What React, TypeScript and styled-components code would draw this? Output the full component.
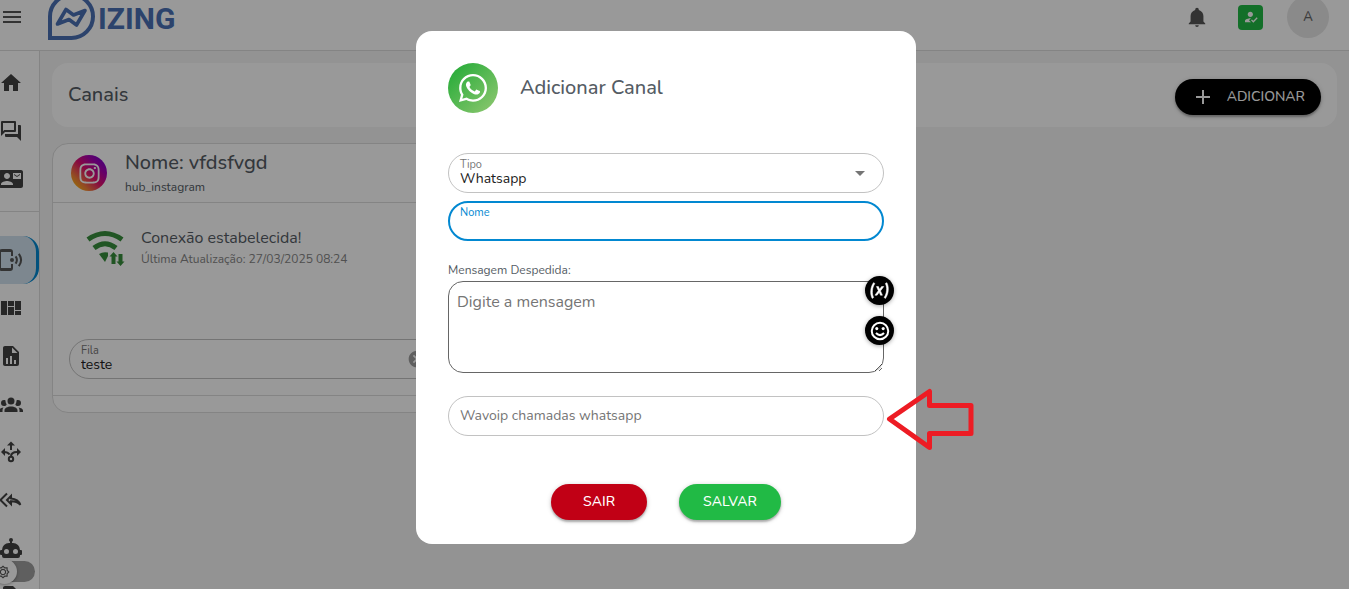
import React, { useState } from "react";
import styled, { createGlobalStyle, css } from "styled-components";
import {
  MdAdd,
  MdArrowDropDown,
  MdCancel,
  MdContactMail,
  MdHome,
  MdHowToReg,
  MdMenu,
  MdOutlineBrightness5,
} from "react-icons/md";
import { FaInstagram, FaWhatsapp } from "react-icons/fa";

const GlobalStyle = createGlobalStyle`
  *, *::before, *::after { box-sizing: border-box; }
  body {
    margin: 0;
    background: #f5f5f5;
    color: #555c64;
    font-family: "Nunito", "Open Sans", "Noto Sans", sans-serif;
    font-size: 14px;
  }
  button, input, select, textarea { font: inherit; color: inherit; }
  button { cursor: pointer; }
  svg { display: block; flex: none; }
`;

const primary = "#0288d1";

const Shell = styled.div`
  display: flex;
  flex-direction: column;
  height: 100vh;
  overflow: hidden;
`;

const Header = styled.header`
  display: flex;
  align-items: center;
  flex: none;
  height: 51px;
  padding: 0 20px 16px 0;
  background: #fff;
  border-bottom: 1px solid #dcdcdc;
`;

const IconButton = styled.button`
  display: flex;
  padding: 0;
  border: 0;
  background: none;
  color: #555;
`;

const Brand = styled.a`
  display: flex;
  align-items: center;
  gap: 3px;
  height: 34px;
  margin-left: 24px;
  color: #4a70b5;
  text-decoration: none;
`;

const Wordmark = styled.span`
  padding-top: 4px;
  font: bold 30px/30px Roboto, "Liberation Sans", sans-serif;
`;

const HeaderActions = styled.div`
  display: flex;
  align-items: center;
  margin-left: auto;
`;

const Status = styled.button`
  display: flex;
  align-items: center;
  justify-content: center;
  width: 25px;
  height: 25px;
  margin: 0 24px 0 30px;
  padding: 0;
  border: 0;
  border-radius: 4px;
  background: #21ba45;
  color: #fff;
`;

const UserAvatar = styled.button`
  width: 42px;
  height: 42px;
  padding: 0;
  border: 0;
  border-radius: 50%;
  background: #e6e6e6;
  color: #666;
  font-size: 13px;
  font-weight: 600;
`;

const Body = styled.div`
  display: flex;
  flex: 1;
  min-height: 0;
`;

const Sidebar = styled.nav`
  flex: none;
  width: 40px;
  padding-top: 8px;
  background: #fff;
  border-right: 1px solid #dcdcdc;
`;

const NavItem = styled.a<{ $active?: boolean }>`
  display: flex;
  align-items: center;
  height: 48px;
  color: #424242;
  ${(p) =>
    p.$active &&
    css`
      background: #d0e2ee;
      border-right: 3px solid ${primary};
      border-radius: 0 16px 16px 0;
    `}
`;

const NavIcon = styled.span`
  display: flex;
  justify-content: center;
  width: 22px;
`;

const Divider = styled.hr`
  height: 1px;
  margin: 8px 0 24px;
  border: 0;
  background: #dcdcdc;
`;

const ThemeToggle = styled.label`
  position: fixed;
  left: -8px;
  bottom: 5px;
  display: flex;
  align-items: center;
  width: 43px;
  height: 25px;
  cursor: pointer;

  input {
    position: absolute;
    opacity: 0;
  }
`;

const Track = styled.span`
  display: flex;
  align-items: center;
  width: 43px;
  height: 21px;
  border-radius: 11px;
  background: #9e9e9e;
`;

const Knob = styled.span`
  display: flex;
  align-items: center;
  justify-content: center;
  width: 25px;
  height: 25px;
  padding-right: 4px;
  flex: none;
  border-radius: 50%;
  background: #fff;
  color: #555;
  box-shadow: 0 1px 3px rgba(0, 0, 0, 0.3);
`;

const Main = styled.main`
  flex: 1;
  min-width: 0;
  padding: 12px;
`;

const PageBar = styled.section`
  display: flex;
  align-items: flex-start;
  justify-content: space-between;
  height: 64px;
  padding: 16px 16px 0;
  border-radius: 16px;
  background: #fff;
`;

const Heading = styled.h2<{ $compact?: boolean }>`
  margin: 0;
  font-size: 20px;
  line-height: ${(p) => (p.$compact ? "28px" : "32px")};
  font-weight: 500;
`;

const PillButton = styled.button<{ $color: string; $wide?: boolean }>`
  display: flex;
  align-items: center;
  justify-content: center;
  gap: 12px;
  height: 36px;
  min-width: 96px;
  padding: ${(p) => (p.$wide ? "0 24px 1px" : "0 16px 1px")};
  border: 0;
  border-radius: 18px;
  background: ${(p) => p.$color};
  color: #fff;
  font-weight: 500;
  text-transform: uppercase;
  box-shadow: 0 1px 5px rgba(0, 0, 0, 0.2), 0 2px 2px rgba(0, 0, 0, 0.24);
`;

const CardGrid = styled.div`
  display: grid;
  grid-template-columns: repeat(3, 1fr);
  margin-top: 16px;
`;

const Card = styled.article`
  border: 1px solid #dcdcdc;
  border-radius: 16px;
  background: #fff;
`;

const CardHeader = styled.header`
  display: flex;
  align-items: center;
  gap: 18px;
  height: 58px;
  padding: 0 18px;
`;

const CardText = styled.div`
  display: flex;
  flex-direction: column;
`;

const Caption = styled.span<{ $muted?: boolean }>`
  font-size: 12px;
  line-height: 20px;
  color: ${(p) => (p.$muted ? "#858585" : "inherit")};
`;

const InstagramBadge = styled.span`
  display: flex;
  align-items: center;
  justify-content: center;
  width: 36px;
  height: 36px;
  border-radius: 50%;
  background: linear-gradient(45deg, #fdc500 5%, #f5803a 25%, #e1106c 50%, #a800b0 72%, #6a00d0 95%);
  color: #fff;
`;

const CardBody = styled.div`
  display: flex;
  flex-direction: column;
  justify-content: space-between;
  height: 194px;
  padding: 24px 16px 16px;
  border: solid #dcdcdc;
  border-width: 1px 0;
`;

const Connection = styled.div`
  display: flex;
  align-items: center;
  gap: 16px;
  padding-left: 16px;
`;

const ConnectionTitle = styled.span`
  font-size: 16px;
  line-height: 22px;
`;

const CardFooter = styled.footer`
  height: 16px;
`;

const FieldBox = styled.div<{ $focused?: boolean }>`
  display: flex;
  align-items: center;
  height: 40px;
  padding: 0 11px;
  border: 1px solid #c2c2c2;
  border-radius: 20px;
  ${(p) =>
    p.$focused &&
    css`
      padding: 0 10px;
      border: 2px solid ${primary};
    `}
`;

const FieldStack = styled.div`
  display: flex;
  flex-direction: column;
  flex: 1;
  min-width: 0;
`;

const controlStyle = css`
  width: 100%;
  height: 16px;
  padding: 0;
  border: 0;
  outline: 0;
  appearance: none;
  background: transparent;
  color: #212121;
  line-height: 16px;
`;

const Select = styled.select`
  ${controlStyle}
`;

const Input = styled.input`
  ${controlStyle}
  &::placeholder {
    color: #757575;
    opacity: 1;
  }
`;

const FloatingLabel = styled.label<{ $active?: boolean }>`
  font-size: 11px;
  line-height: 12px;
  color: ${(p) => (p.$active ? primary : "#757575")};
`;

const FieldIcon = styled.span<{ $faded?: boolean }>`
  display: flex;
  color: ${(p) => (p.$faded ? "#9e9e9e" : "#757575")};
`;

const Backdrop = styled.div`
  position: fixed;
  inset: 0;
  display: flex;
  align-items: center;
  justify-content: center;
  padding: 0 17px 14px 0;
  background: rgba(0, 0, 0, 0.4);
`;

const Dialog = styled.section`
  position: relative;
  width: 500px;
  max-width: 90%;
  padding: 32px 32px 24px;
  border-radius: 16px;
  background: #fff;
`;

const DialogHeader = styled.header`
  display: flex;
  align-items: center;
  gap: 22px;
  margin-bottom: 40px;
`;

const WhatsappBadge = styled.span`
  display: flex;
  align-items: center;
  justify-content: center;
  width: 50px;
  height: 50px;
  border-radius: 50%;
  background: linear-gradient(135deg, #2fae3d 15%, #86c56c 90%);
  color: #fff;
`;

const Form = styled.form`
  display: flex;
  flex-direction: column;
`;

const FieldGroup = styled.div`
  display: flex;
  flex-direction: column;
  gap: 8px;
  margin-bottom: 20px;
`;

const MessageLabel = styled.label`
  margin-bottom: 2px;
  font-size: 12px;
  line-height: 18px;
`;

const MessageBox = styled.div`
  position: relative;
  display: flex;
  margin-bottom: 23px;
`;

const Message = styled.textarea`
  width: 100%;
  height: 92px;
  padding: 8px;
  border: 1px solid #666;
  border-radius: 15px;
  outline: 0;
  font-size: 16px;
  line-height: 24px;
  resize: vertical;
  &::placeholder {
    color: #757575;
  }
`;

const MessageTools = styled.div`
  position: absolute;
  top: -5px;
  right: -10px;
  display: flex;
  flex-direction: column;
  gap: 11px;
`;

const RoundButton = styled.button`
  display: flex;
  align-items: center;
  justify-content: center;
  width: 29px;
  height: 29px;
  padding: 0;
  border: 0;
  border-radius: 50%;
  background: #000;
  color: #fff;
  box-shadow: 0 1px 4px rgba(0, 0, 0, 0.35);
`;

const Actions = styled.div`
  display: flex;
  justify-content: center;
  gap: 32px;
  margin-top: 48px;
`;

const Pointer = styled.svg`
  position: absolute;
  right: -59px;
  bottom: 93px;
`;

const paths = {
  forum:
    "M15,4V11H5.17L4,12.17V4H15M16,2H3A1,1 0 0,0 2,3V17L6,13H16A1,1 0 0,0 17,12V3A1,1 0 0,0 16,2M21,6H19V15H6V17A1,1 0 0,0 7,18H18L22,22V7A1,1 0 0,0 21,6Z",
  dashboard: "M2 5H8V19H2ZM9 5H15V10H9ZM16 5H22V14H16ZM9 11H15V19H9ZM16 15H22V19H16Z",
  report:
    "M13,9H18.5L13,3.5V9M6,2H14L20,8V20A2,2 0 0,1 18,22H6C4.89,22 4,21.1 4,20V4C4,2.89 4.89,2 6,2M7,20H9V14H7V20M11,20H13V12H11V20M15,20H17V16H15V20Z",
  group:
    "M12,5.5A3.5,3.5 0 0,1 15.5,9A3.5,3.5 0 0,1 12,12.5A3.5,3.5 0 0,1 8.5,9A3.5,3.5 0 0,1 12,5.5M5,8C5.56,8 6.08,8.15 6.53,8.42C6.38,9.85 6.8,11.27 7.66,12.38C7.16,13.34 6.16,14 5,14A3,3 0 0,1 2,11A3,3 0 0,1 5,8M19,8A3,3 0 0,1 22,11A3,3 0 0,1 19,14C17.84,14 16.84,13.34 16.34,12.38C17.2,11.27 17.62,9.85 17.47,8.42C17.92,8.15 18.44,8 19,8M5.5,18.25C5.5,16.18 8.41,14.5 12,14.5C15.59,14.5 18.5,16.18 18.5,18.25V20H5.5V18.25M0,20V18.5C0,17.11 1.89,15.94 4.45,15.6C3.86,16.28 3.5,17.22 3.5,18.25V20H0M24,20H20.5V18.25C20.5,17.22 20.14,16.28 19.55,15.6C22.11,15.94 24,17.11 24,18.5V20Z",
  robot:
    "M12,2A2,2 0 0,1 14,4C14,4.74 13.6,5.39 13,5.73V7H14A7,7 0 0,1 21,14H22A1,1 0 0,1 23,15V18A1,1 0 0,1 22,19H21V20A2,2 0 0,1 19,22H5A2,2 0 0,1 3,20V19H2A1,1 0 0,1 1,18V15A1,1 0 0,1 2,14H3A7,7 0 0,1 10,7H11V5.73C10.4,5.39 10,4.74 10,4A2,2 0 0,1 12,2M7.5,13A2.5,2.5 0 0,0 5,15.5A2.5,2.5 0 0,0 7.5,18A2.5,2.5 0 0,0 10,15.5A2.5,2.5 0 0,0 7.5,13M16.5,13A2.5,2.5 0 0,0 14,15.5A2.5,2.5 0 0,0 16.5,18A2.5,2.5 0 0,0 19,15.5A2.5,2.5 0 0,0 16.5,13Z",
  bell: "M21,19V20H3V19L5,17V11C5,7.9 7.03,5.17 10,4.29C10,4.19 10,4.1 10,4A2,2 0 0,1 12,2A2,2 0 0,1 14,4C14,4.1 14,4.19 14,4.29C16.97,5.17 19,7.9 19,11V17L21,19M14,21A2,2 0 0,1 12,23A2,2 0 0,1 10,21",
  variable:
    "M20.41,3C21.8,5.71 22.35,8.84 22,12C21.8,15.16 20.7,18.29 18.83,21L17.3,20C18.91,17.57 19.85,14.8 20,12C20.34,9.2 19.89,6.43 18.7,4L20.41,3M5.17,3L6.7,4C5.09,6.43 4.15,9.2 4,12C3.66,14.8 4.12,17.57 5.3,20L3.61,21C2.21,18.29 1.65,15.17 2,12C2.2,8.84 3.3,5.71 5.17,3M12.08,10.68L14.4,7.45H16.93L13.15,12.45L15.35,17.37H13.09L11.71,14L9.28,17.33H6.76L10.66,12.21L8.53,7.45H10.8L12.08,10.68Z",
  file: "M6,2H14L20,8V20A2,2 0 0,1 18,22H6C4.89,22 4,21.1 4,20V4C4,2.89 4.89,2 6,2Z",
};

function Glyph({ d, size = 24, weight = 0 }: { d: string; size?: number; weight?: number }) {
  return (
    <svg
      width={size}
      height={size}
      viewBox="0 0 24 24"
      fill="currentColor"
      stroke={weight ? "currentColor" : "none"}
      strokeWidth={weight}
      aria-hidden
    >
      <path d={d} />
    </svg>
  );
}

function Smiley() {
  return (
    <svg width="22" height="22" viewBox="0 0 24 24" fill="none" stroke="currentColor" strokeWidth="2.2" aria-hidden>
      <circle cx="12" cy="12" r="9" />
      <path d="M7.6 14.2Q12 18.8 16.4 14.2" />
      <circle cx="8.5" cy="9.4" r="1.7" fill="currentColor" stroke="none" />
      <circle cx="15.5" cy="9.4" r="1.7" fill="currentColor" stroke="none" />
    </svg>
  );
}

function PhoneSignal() {
  return (
    <svg width="24" height="24" viewBox="0 0 24 24" fill="none" stroke="#555" strokeWidth="2" aria-hidden>
      <path d="M13 8V4Q13 2 11 2H3Q1 2 1 4V20Q1 22 3 22H11Q13 22 13 20V16" />
      <path d="M1 3H13M1 21H13" />
      <circle cx="13" cy="12" r="2" fill="#555" stroke="none" />
      <path d="M16.6 8.4Q19.2 12 16.6 15.6M19.8 5.8Q24.4 12 19.8 18.2" />
    </svg>
  );
}

function Decision() {
  return (
    <svg width="24" height="24" viewBox="0 0 24 24" fill="none" stroke="currentColor" strokeWidth="2" aria-hidden>
      <circle cx="12" cy="19" r="2.2" />
      <path d="M12 5V10M12 16.5C12 13 14 12 18 12M10.6 14.5C9.4 12.8 8 12 5 12" />
      <path d="M12 1.5L16 5.5H8ZM2 12L6 8V16ZM22 12L18 8V16Z" fill="currentColor" stroke="none" />
    </svg>
  );
}

function ReplyAll() {
  return (
    <svg width="24" height="24" viewBox="0 0 24 24" fill="none" stroke="currentColor" strokeWidth="2" aria-hidden>
      <path d="M8 5.5L1.4 12L8 18.5" />
      <path d="M12 8L8 12L12 16V13.2C16 13.1 18.6 14 21.4 16.8C20 13 17.5 10.8 12 10.4Z" />
    </svg>
  );
}

function WifiSync() {
  return (
    <svg width="40" height="40" viewBox="0 0 40 40" fill="none" stroke="#388e3c" aria-hidden>
      <path d="M3 11.5Q20 -0.5 37 11.5" strokeWidth="5" />
      <path d="M9 20Q20 11.5 31 20" strokeWidth="5" />
      <path d="M14 26Q18 23.5 23 24.6V28L20 34Z" fill="#388e3c" stroke="none" />
      <path
        d="M28.5 24L32.5 28.5H30.5V36H26.5V28.5H24.5ZM35.5 38L31.5 33.5H33.5V26H37.5V33.5H39.5Z"
        fill="#388e3c"
        stroke="none"
      />
    </svg>
  );
}

function BrandMark() {
  return (
    <svg width="47" height="46" viewBox="0 0 47 46" fill="none" stroke="currentColor" aria-hidden>
      <path d="M2 44V22.5A21.5 21.5 0 1 1 23.5 44Z" strokeWidth="4" />
      <path d="M9.5 30L18 15.5L25.5 21L37 16.5L28.5 31L21 25.5Z" strokeWidth="3.6" strokeLinejoin="round" />
    </svg>
  );
}

export default function App() {
  const [dark, setDark] = useState(false);
  const [queue, setQueue] = useState("teste");
  const [type, setType] = useState("Whatsapp");
  const [name, setName] = useState("");

  return (
    <>
      <GlobalStyle />
      <Shell>
        <Header>
          <IconButton aria-label="Menu">
            <MdMenu size={24} />
          </IconButton>
          <Brand href="#">
            <BrandMark />
            <Wordmark>IZING</Wordmark>
          </Brand>
          <HeaderActions>
            <IconButton aria-label="Notificações">
              <Glyph d={paths.bell} size={22} />
            </IconButton>
            <Status aria-label="Online">
              <MdHowToReg size={16} />
            </Status>
            <UserAvatar>A</UserAvatar>
          </HeaderActions>
        </Header>
        <Body>
          <Sidebar>
            <NavItem href="#" aria-label="Início"><NavIcon><MdHome size={24} /></NavIcon></NavItem>
            <NavItem href="#" aria-label="Atendimentos"><NavIcon><Glyph d={paths.forum} /></NavIcon></NavItem>
            <NavItem href="#" aria-label="Contatos"><NavIcon><MdContactMail size={24} /></NavIcon></NavItem>
            <Divider />
            <NavItem href="#" aria-label="Canais" $active><NavIcon><PhoneSignal /></NavIcon></NavItem>
            <NavItem href="#" aria-label="Painel"><NavIcon><Glyph d={paths.dashboard} /></NavIcon></NavItem>
            <NavItem href="#" aria-label="Relatórios"><NavIcon><Glyph d={paths.report} /></NavIcon></NavItem>
            <NavItem href="#" aria-label="Usuários"><NavIcon><Glyph d={paths.group} /></NavIcon></NavItem>
            <NavItem href="#" aria-label="Filas"><NavIcon><Decision /></NavIcon></NavItem>
            <NavItem href="#" aria-label="Mensagens rápidas"><NavIcon><ReplyAll /></NavIcon></NavItem>
            <NavItem href="#" aria-label="Chatbot"><NavIcon><Glyph d={paths.robot} /></NavIcon></NavItem>
            <NavItem href="#" aria-label="Arquivos"><NavIcon><Glyph d={paths.file} /></NavIcon></NavItem>
          </Sidebar>
          <Main>
            <PageBar>
              <Heading>Canais</Heading>
              <PillButton $color="#000">
                <MdAdd size={24} />
                Adicionar
              </PillButton>
            </PageBar>
            <CardGrid>
              <Card>
                <CardHeader>
                  <InstagramBadge><FaInstagram size={23} /></InstagramBadge>
                  <CardText>
                    <Heading $compact>Nome: vfdsfvgd</Heading>
                    <Caption>hub_instagram</Caption>
                  </CardText>
                </CardHeader>
                <CardBody>
                  <Connection>
                    <WifiSync />
                    <CardText>
                      <ConnectionTitle>Conexão estabelecida!</ConnectionTitle>
                      <Caption $muted>Última Atualização: 27/03/2025 08:24</Caption>
                    </CardText>
                  </Connection>
                  <FieldBox>
                    <FieldStack>
                      <FloatingLabel htmlFor="queue">Fila</FloatingLabel>
                      <Select id="queue" value={queue} onChange={(e) => setQueue(e.target.value)}>
                        <option>teste</option>
                      </Select>
                    </FieldStack>
                    <FieldIcon $faded><MdCancel size={20} /></FieldIcon>
                    <FieldIcon><MdArrowDropDown size={24} /></FieldIcon>
                  </FieldBox>
                </CardBody>
                <CardFooter />
              </Card>
            </CardGrid>
          </Main>
        </Body>
        <ThemeToggle aria-label="Tema escuro">
          <input type="checkbox" checked={dark} onChange={() => setDark(!dark)} />
          <Track>
            <Knob><MdOutlineBrightness5 size={14} /></Knob>
          </Track>
        </ThemeToggle>
      </Shell>

      <Backdrop>
        <Dialog role="dialog" aria-modal="true" aria-labelledby="dialog-title">
          <DialogHeader>
            <WhatsappBadge><FaWhatsapp size={32} /></WhatsappBadge>
            <Heading id="dialog-title">Adicionar Canal</Heading>
          </DialogHeader>
          <Form onSubmit={(e) => e.preventDefault()}>
            <FieldGroup>
              <FieldBox>
                <FieldStack>
                  <FloatingLabel htmlFor="type">Tipo</FloatingLabel>
                  <Select id="type" value={type} onChange={(e) => setType(e.target.value)}>
                    <option>Whatsapp</option>
                    <option>Instagram</option>
                  </Select>
                </FieldStack>
                <FieldIcon><MdArrowDropDown size={24} /></FieldIcon>
              </FieldBox>
              <FieldBox $focused>
                <FieldStack>
                  <FloatingLabel htmlFor="name" $active>Nome</FloatingLabel>
                  <Input id="name" value={name} onChange={(e) => setName(e.target.value)} />
                </FieldStack>
              </FieldBox>
            </FieldGroup>
            <MessageLabel htmlFor="message">Mensagem Despedida:</MessageLabel>
            <MessageBox>
              <Message id="message" placeholder="Digite a mensagem" />
              <MessageTools>
                <RoundButton type="button" aria-label="Variáveis">
                  <Glyph d={paths.variable} size={21} weight={0.6} />
                </RoundButton>
                <RoundButton type="button" aria-label="Emoji">
                  <Smiley />
                </RoundButton>
              </MessageTools>
            </MessageBox>
            <FieldBox>
              <Input aria-label="Wavoip chamadas whatsapp" placeholder="Wavoip chamadas whatsapp" />
            </FieldBox>
            <Actions>
              <PillButton type="button" $wide $color="#c10015">Sair</PillButton>
              <PillButton type="submit" $wide $color="#21ba45">Salvar</PillButton>
            </Actions>
          </Form>
          <Pointer width="90" height="64" viewBox="0 0 90 64" fill="none" stroke="#ed1c24" strokeWidth="5" aria-hidden>
            <path d="M4.5 32L44.5 4.5V18.5H86V46.5H44.5V60.5Z" strokeLinejoin="round" />
          </Pointer>
        </Dialog>
      </Backdrop>
    </>
  );
}
